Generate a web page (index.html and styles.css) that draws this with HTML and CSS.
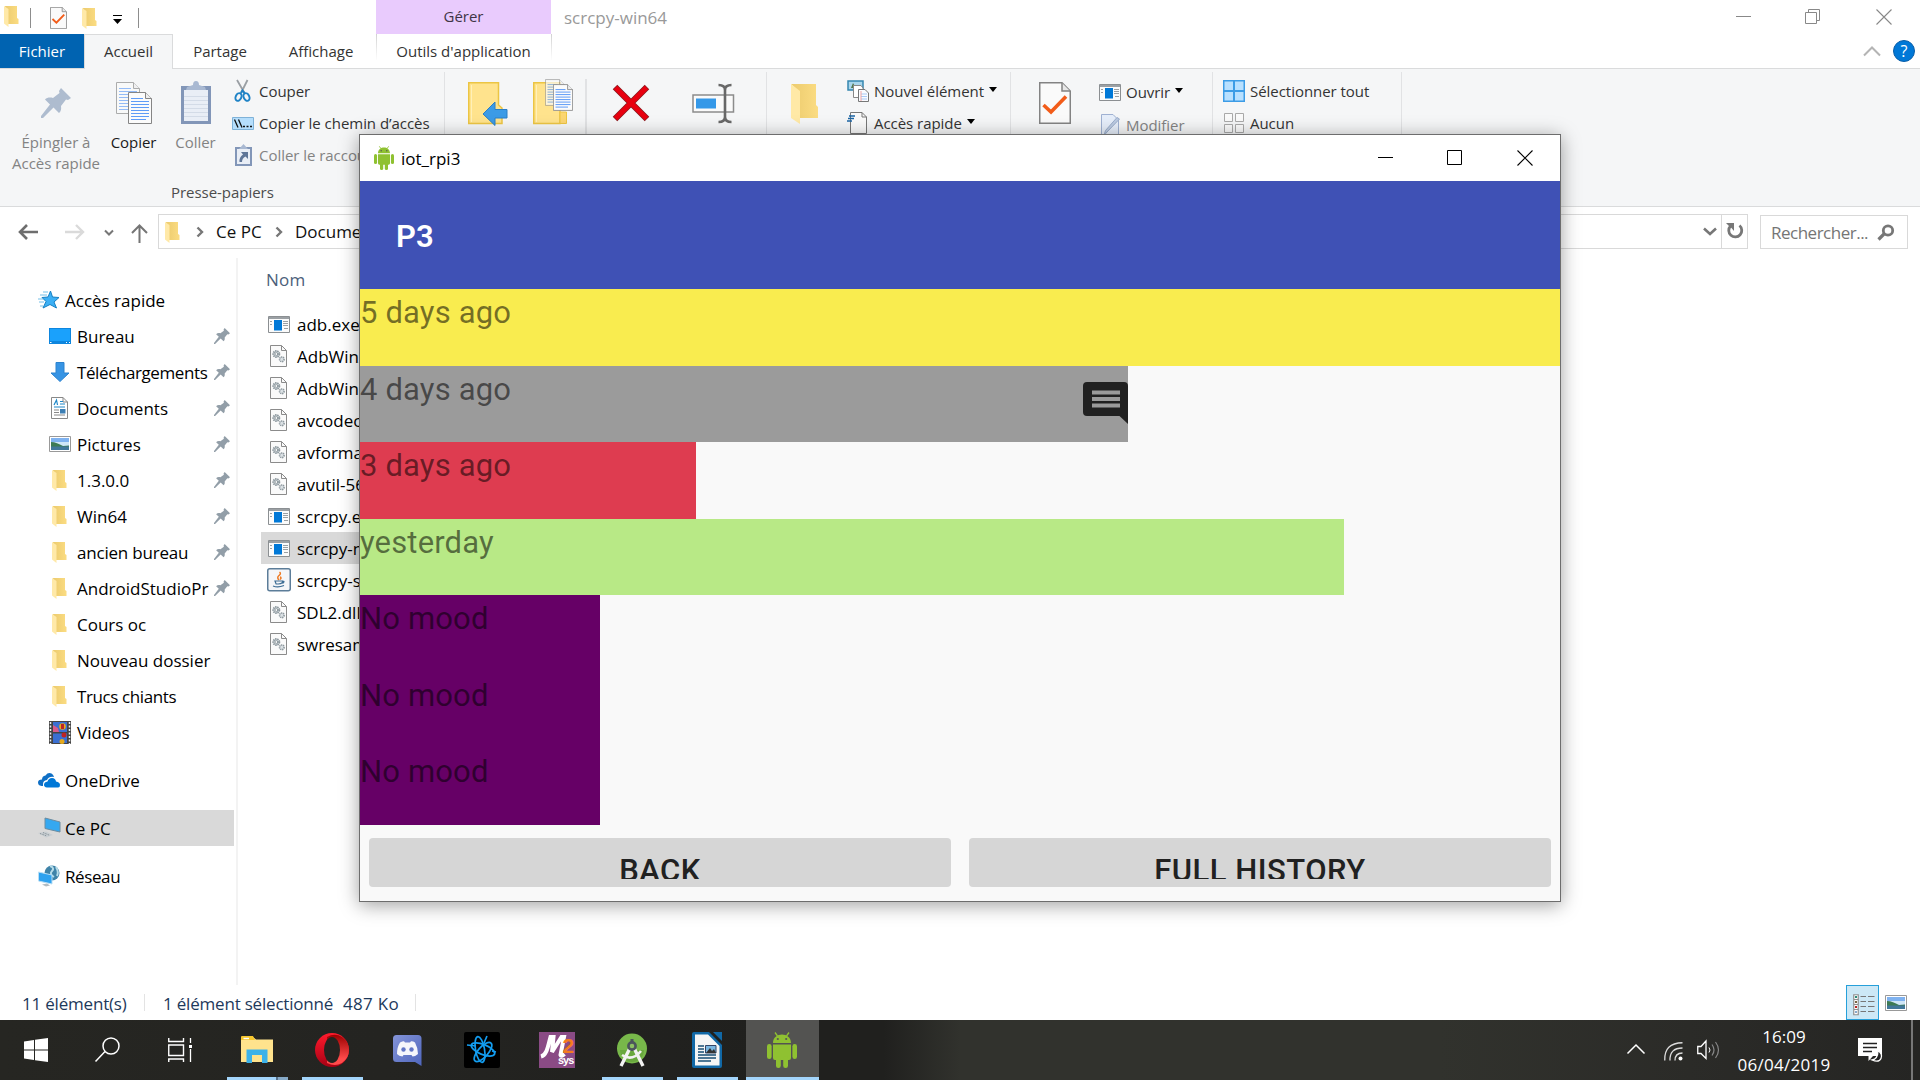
FILE: index.html
```html
<!DOCTYPE html>
<html lang="fr">
<head>
<meta charset="utf-8">
<title>scrcpy-win64</title>
<link rel="stylesheet" href="styles.css">
</head>
<body>
<svg class="defs" width="0" height="0">
  <defs>
    <linearGradient id="gold" x1="0" x2="1"><stop offset="0" stop-color="#eccb6e"/><stop offset="1" stop-color="#fbdc82"/></linearGradient>
    <linearGradient id="operaA" x1="0" y1="0" x2="0" y2="1"><stop offset="0" stop-color="#ff1b2d"/><stop offset="1" stop-color="#a70014"/></linearGradient>
    <linearGradient id="operaB" x1="0" y1="0" x2="0" y2="1"><stop offset="0" stop-color="#9c0000"/><stop offset=".8" stop-color="#ff4b4b"/></linearGradient>
    <linearGradient id="discordG" x1="0" y1="0" x2="1" y2="1"><stop offset="0" stop-color="#8494d8"/><stop offset="1" stop-color="#4f66bd"/></linearGradient>
    <symbol id="folder" viewBox="0 0 15 22"><path d="M1 1H13V13L14.500 14V19H4Z" fill="url(#gold)"/><path d="M0 1L4.500 4V22L0 18.500Z" fill="#ffe9a8"/></symbol>
    <symbol id="pin" viewBox="0 0 30 30"><path d="M20 0L30 10L27 12L25 11.500L20 18C20.500 21 20 23.500 18 25L12.500 19.500L2 30H0V28L9 16.500L4 11.500C6 9.500 9 9 12 10L18.500 5L18 3Z"/></symbol>
    <symbol id="page" viewBox="0 0 24 32"><path d="M.5.5H17.500L23.500 6.500V31.500H.5Z" fill="#fbfbfb" stroke="#858585"/><path d="M17.500.5V6.500H23.500" fill="#eee" stroke="#858585"/><path d="M3 6.500H15M3 9.500H21M3 12.500H21M3 15.500H21M3 18.500H21M3 21.500H21M3 24.500H21M3 27.500H18" stroke="#5f9cf7" stroke-width="1.200"/></symbol>
    <symbol id="check" viewBox="0 0 32 42"><path d="M.75.75H23L31.250 9V41.250H.75Z" fill="#fafafa" stroke="#838383" stroke-width="1.500"/><path d="M23 1V9H31" fill="#e7e7e7" stroke="#838383" stroke-width="1.500"/><path d="M4.500 23L12 30L27 14.500" fill="none" stroke="#f25c19" stroke-width="3.600"/></symbol>
    <symbol id="exe" viewBox="0 0 22 17"><path d="M.5.5H21.500V16.500H.5Z" fill="#fbfbfb" stroke="#8b8f92"/><path d="M1 1H21V3H1Z" fill="#9ba0a4"/><path d="M6 4H14V14.500H6Z" fill="#0078d7"/><path d="M2 5.500H4M2 8.500H4M15 5.500H20M15 7.500H20M15 9.500H20M16 12.500H20" stroke="#9aa0a4"/></symbol>
    <symbol id="dll" viewBox="0 0 17 22"><path d="M.5.5H11.500L16.500 5.500V21.500H.5Z" fill="#fafafa" stroke="#8b8b8b"/><path d="M11.500.5V5.500H16.500" fill="none" stroke="#8b8b8b"/><circle cx="6.300" cy="9" r="3" fill="#dce2e5" stroke="#8c979d" stroke-width="2" stroke-dasharray="1.400 .7"/><circle cx="6.300" cy="9" r="1.400" fill="#fff" stroke="#7c888e" stroke-width=".8"/><circle cx="11.800" cy="14.300" r="2.300" fill="#dce2e5" stroke="#8c979d" stroke-width="1.600" stroke-dasharray="1.200 .6"/></symbol>
    <symbol id="chev" viewBox="0 0 14 9"><path d="M1 1.500L7 7L13 1.500" fill="none" stroke="currentColor" stroke-width="2.600"/></symbol>
    <symbol id="photo" viewBox="0 0 22 16"><path d="M.5.5H21.500V15.500H.5Z" fill="#fff" stroke="#999"/><path d="M2 2H20V9H2Z" fill="#7fb2f0"/><path d="M2 6H20V10H2Z" fill="#cfe6f7"/><path d="M2 6C6 6 10 8 14 10L20 9.500V11H2Z" fill="#3d7a55"/><path d="M2 10.500H20V14H2Z" fill="#41779a"/></symbol>
    <symbol id="droid" viewBox="0 0 30 36"><g fill="#8fc131"><rect x="0" y="12" width="4.600" height="15" rx="2.300"/><rect x="25.400" y="12" width="4.600" height="15" rx="2.300"/><path d="M6 11C6 -.5 24 -.5 24 11ZM6 12.500H24V26Q24 28 22 28H8Q6 28 6 26Z"/><rect x="9" y="24" width="4.800" height="12" rx="2.300"/><rect x="16.200" y="24" width="4.800" height="12" rx="2.300"/><path d="M8 .5L10.500 4M22 .5L19.500 4" stroke="#8fc131" stroke-width="1.300"/></g><circle cx="10.800" cy="7" r="1.100" fill="#555"/><circle cx="19.200" cy="7" r="1.100" fill="#555"/></symbol>
    <symbol id="caret" viewBox="0 0 8 5"><path d="M0 0H8L4 5Z"/></symbol>
    <symbol id="close" viewBox="0 0 16 16"><path d="M.5.5L15.500 15.500M15.500.5L.5 15.500" fill="none" stroke="currentColor" stroke-width="1.100"/></symbol>
  </defs>
</svg>

<main class="explorer">
  <header class="titlebar">
    <div class="quick">
      <svg class="folder-sm" width="15" height="22"><use href="#folder"/></svg>
      <i class="qsep"></i>
      <svg class="q-check" width="17" height="22"><use href="#check"/></svg>
      <svg class="q-folder" width="15" height="22"><use href="#folder"/></svg>
      <svg class="q-more" width="9" height="9" viewBox="0 0 9 9"><path d="M0 .5H9" stroke="#000"/><path d="M0 4H9L4.500 9Z"/></svg>
      <i class="qsep q-last"></i>
    </div>
    <div class="manage">Gérer</div>
    <div class="title">scrcpy-win64</div>
    <div class="controls">
      <svg width="15" height="16"><path d="M0 7.500H15" stroke="#888"/></svg>
      <svg width="16" height="16"><path d="M.5 3.500H11.500V14.500H.5ZM3.500 3.500V.5H14.500V11.500H11.500" fill="none" stroke="#888"/></svg>
      <svg width="16" height="16" class="gray"><use href="#close"/></svg>
    </div>
  </header>

  <nav class="tabs">
    <div class="tab file">Fichier</div>
    <div class="tab active">Accueil</div>
    <div class="tab share">Partage</div>
    <div class="tab view">Affichage</div>
    <div class="tab tools">Outils d'application</div>
    <svg class="fold" width="18" height="11"><path d="M1 9.500L9 1.500L17 9.500" fill="none" stroke="#b4b4b4" stroke-width="2"/></svg>
    <div class="help">?</div>
  </nav>

  <section class="ribbon">
    <div class="group clip">
      <div class="group-row">
        <div class="big pinbig off"><svg width="30" height="30" fill="#aebccf"><use href="#pin"/></svg><span>Épingler à<br>Accès rapide</span></div>
        <div class="big copy"><svg width="38" height="46"><use href="#page" x="1" y="2" width="24" height="32" opacity=".65"/><use href="#page" x="13" y="12" width="24" height="32"/></svg><span>Copier</span></div>
        <div class="big paste off"><svg width="30" height="44"><path d="M0 5H30V43H0Z" fill="#8296b8"/><path d="M3 9H27V40H3Z" fill="#e9eef6"/><path d="M3 15.500H27M3 19.500H27M3 23.500H27M3 27.500H27M3 31.500H27M3 35.500H27" stroke="#d3dbe7"/><path d="M5 9L6 6L12 4Q12 0 15 0T18 4L24 6L25 9Z" fill="#a9b9d2"/></svg><span>Coller</span></div>
        <div class="smalls">
          <div class="small"><svg width="22" height="22" viewBox="0 0 22 22"><path d="M5 0L12.500 13M15.500 0L9 13" stroke="#9a9fa4" stroke-width="1.800"/><ellipse cx="6.500" cy="17" rx="2.800" ry="4" transform="rotate(25 6.500 17)" fill="none" stroke="#1f83c6" stroke-width="2"/><ellipse cx="14.500" cy="17" rx="2.800" ry="4" transform="rotate(-25 14.500 17)" fill="none" stroke="#1f83c6" stroke-width="2"/><path d="M9 13L10.500 10.500L12.500 13" stroke="#1f83c6" stroke-width="2" fill="none"/></svg>Couper</div>
          <div class="small"><svg width="22" height="13"><path d="M.5.5H21.500V12.500H.5Z" fill="#b5defc" stroke="#7fb2d8"/><path d="M2.500 2.500L6 10.500M6.500 2.500L10 10.500" stroke="#111" stroke-width="1.300"/><path d="M11 9.500H13M14.500 9.500H16.500M18 9.500H20" stroke="#111" stroke-width="1.500"/></svg>Copier le chemin d’accès</div>
          <div class="small off"><svg width="22" height="22"><path d="M4 4H19V21H4Z" fill="#e9eef6" stroke="#8296b8" stroke-width="2"/><path d="M7 5L11.500 0L16 5Z" fill="#a9b9d2"/><path d="M9 8H16V15L13.500 12.500Q10 14 10 18H7.500Q7 13 11 10.500Z" fill="#5f7698"/></svg>Coller le raccourci</div>
        </div>
      </div>
      <div class="group-name">Presse-papiers</div>
    </div>

    <div class="group organise">
      <svg class="ico-move" width="40" height="44"><path d="M.75.75H30.500V23L34 26V41.500H.75Z" fill="#ffe38d" stroke="#ecc544" stroke-width="1.500"/><path d="M3.500 3V40" stroke="#fff0b8"/><path d="M15 32L27 20V27.500H39V36H27V43.500Z" fill="#3c9be6" stroke="#2a7fc6"/></svg>
      <svg class="ico-copyto" width="41" height="46"><path d="M.75 3.750H27V44.500H.75Z" fill="#ffe38d" stroke="#ecc544" stroke-width="1.500"/><path d="M27 33H33.500V44.500H27Z" fill="#fcd671" stroke="#ecc544"/><path d="M3.500 6V43" stroke="#fff0b8"/><use href="#page" x="12" y="0" width="20" height="27" opacity=".7"/><use href="#page" x="20" y="5" width="20" height="27"/></svg>
      <i class="innersep"></i>
      <svg class="ico-del" width="38" height="38"><path d="M3 3L35 35M35 3L3 35" stroke="#8a1a1f" stroke-width="6.400"/><path d="M3.500 3.500L34.500 34.500M34.500 3.500L3.500 34.500" stroke="#e8000f" stroke-width="4.800"/></svg>
      <svg class="ico-ren" width="43" height="39"><path d="M1 11H41.500V28H1Z" fill="#fafafa" stroke="#8c8c8c" stroke-width="1.500"/><path d="M4 14.500H24V24.500H4Z" fill="#3498e8"/><path d="M26.500 1Q33 1 33 6V33Q33 38 26.500 38M39.500 1Q33 1 33 6M33 33Q33 38 39.500 38" fill="none" stroke="#686868" stroke-width="2.600"/></svg>
    </div>

    <div class="group create">
      <svg class="ico-new" width="29" height="42" viewBox="0 0 29 42"><path d="M0 1H25V22L27 24V35H8V9Z" fill="url(#gold)"/><path d="M0 1L9 8V41L0 35Z" fill="#ffe9a6"/></svg>
      <div class="smalls">
        <div class="small"><svg width="22" height="22"><path d="M1 1H16V10H1Z" fill="#a9d6ec" stroke="#3587b0" stroke-width="1.500"/><path d="M4 8L6 3L9 8Z" fill="#52764b"/><path d="M6.500 5.500H14L16 8V17.500H6.500Z" fill="#fff" stroke="#888"/><path d="M11.500 9.500H18L21.500 13V21.500H11.500Z" fill="#f9fbff" stroke="#777"/><path d="M14 14H20M14 16.500H20M14 19H20" stroke="#a9c9f5"/><path d="M14 11V21" stroke="#eda3a3"/></svg>Nouvel élément<svg class="caret" width="8" height="5"><use href="#caret"/></svg></div>
        <div class="small"><svg width="22" height="23"><path d="M3.500.5H15L19.500 5V21.500H3.500Z" fill="#fafafa" stroke="#777"/><path d="M15 .5V5H19.500" fill="none" stroke="#777"/><path d="M2 4H8M1 6.500H7M0 9H5" stroke="#1c66a5" stroke-width="1.300"/></svg>Accès rapide<svg class="caret" width="8" height="5"><use href="#caret"/></svg></div>
      </div>
    </div>

    <div class="group open">
      <svg class="ico-prop" width="32" height="42"><use href="#check"/></svg>
      <div class="smalls">
        <div class="small"><svg width="22" height="17"><use href="#exe"/></svg>Ouvrir<svg class="caret" width="8" height="5"><use href="#caret"/></svg></div>
        <div class="small off edit"><svg width="22" height="22"><path d="M2.500.5H14L19.500 6V21.500H2.500Z" fill="#e6eefa" stroke="#9fb1d2"/><path d="M20.500 5L8 18L5 21.500L6.500 16.500L18 3.500Z" fill="#bccbe2" stroke="#9aadcb"/></svg>Modifier</div>
      </div>
    </div>

    <div class="group select">
      <div class="smalls">
        <div class="small"><svg width="22" height="22"><path d="M0 0H22V22H0Z" fill="#3c9ce6"/><path d="M1.500 1.500H10V10H1.500ZM12 1.500H20.500V10H12ZM1.500 12H10V20.500H1.500ZM12 12H20.500V20.500H12Z" fill="#b8e0ff"/></svg>Sélectionner tout</div>
        <div class="small"><svg width="22" height="22"><path d="M1.500 1.500H9.500V9.500H1.500ZM12.500 1.500H20.500V9.500H12.500ZM1.500 12.500H9.500V20.500H1.500ZM12.500 12.500H20.500V20.500H12.500Z" fill="#fafafa" stroke="#a9a9a9"/></svg>Aucun</div>
      </div>
    </div>
  </section>

  <div class="addressrow">
    <svg class="a-back" width="20" height="16"><path d="M20 8H2M9 1L2 8L9 15" fill="none" stroke="#6e6e6e" stroke-width="2.600"/></svg>
    <svg class="a-fwd" width="20" height="16"><path d="M0 8H18M11 1L18 8L11 15" fill="none" stroke="#dadada" stroke-width="2.400"/></svg>
    <svg class="a-hist" width="10" height="7"><path d="M1 1.500L5 5.500L9 1.500" fill="none" stroke="#777" stroke-width="2"/></svg>
    <svg class="a-up" width="17" height="19"><path d="M8.500 19V2M1 9L8.500 1.500L16 9" fill="none" stroke="#757575" stroke-width="2"/></svg>
    <div class="address">
      <svg class="ad-folder" width="15" height="22"><use href="#folder"/></svg>
      <svg class="crumb" width="8" height="12"><path d="M1.500 1.500L6 6L1.500 10.500" fill="none" stroke="#777" stroke-width="2.400"/></svg>
      <span class="pc">Ce PC</span>
      <svg class="crumb" width="8" height="12"><path d="M1.500 1.500L6 6L1.500 10.500" fill="none" stroke="#777" stroke-width="2.400"/></svg>
      <span class="docs">Documents</span>
      <svg class="drop" width="14" height="9"><use href="#chev"/></svg>
      <div class="refresh"><svg width="17" height="17"><path d="M13.500 2.500A6.500 6.500 0 1 1 4.500 3" fill="none" stroke="#777" stroke-width="2.800"/><path d="M0 0H8V8L5.500 5L3 3Z" fill="#777"/></svg></div>
    </div>
    <div class="search"><span>Rechercher...</span><svg width="18" height="17"><circle cx="11" cy="6.500" r="4.700" fill="none" stroke="#777" stroke-width="2.800"/><path d="M7.500 9.500L1.500 15.500" stroke="#777" stroke-width="3.200"/></svg></div>
  </div>

  <section class="body">
    <aside class="tree">
      <div class="node root"><svg width="22" height="20"><path d="M12.500 1L14.500 7L21 7.500L16 12L18.500 18L12 14.500L5 18L8 11.500L4 7.500L10 7Z" fill="#3cb0f5" stroke="#1580c4"/><path d="M5 2H10M2 5H9M0 9H5M1 12H6M2 16H5" stroke="#72bfe8"/></svg>Accès rapide</div>
      <div class="node"><svg width="22" height="16"><path d="M0 0H22V16H0Z" fill="#0e86de"/><path d="M1 1H21V13H1Z" fill="#1aa1fc"/><path d="M1 14.500H2.500M17 14.500H18M20 14.500H21" stroke="#fff"/></svg>Bureau<svg class="tpin" width="16" height="16"><use href="#pin"/></svg></div>
      <div class="node tight"><svg width="22" height="20"><path d="M7 .5H15V11H20L11 19.500L2 11H7Z" fill="#3794e4" stroke="#2c83cf"/></svg>Téléchargements<svg class="tpin" width="16" height="16"><use href="#pin"/></svg></div>
      <div class="node"><svg width="22" height="22"><path d="M2.500.5H14L18.500 5V21.500H2.500Z" fill="#fff" stroke="#888"/><path d="M14 .5V5H18.500" fill="none" stroke="#888"/><path d="M5 8L7.500 3L8.500 8M11 4.500H14M11 7H16M5 10H16" stroke="#2088c8" fill="none" stroke-width="1.200"/><path d="M5 13H10M5 15.500H10M5 18H16" stroke="#888"/><path d="M11 12H16.500V16.500H11Z" fill="#3d7fb4"/></svg>Documents<svg class="tpin" width="16" height="16"><use href="#pin"/></svg></div>
      <div class="node"><svg width="22" height="16"><use href="#photo"/></svg>Pictures<svg class="tpin" width="16" height="16"><use href="#pin"/></svg></div>
      <div class="node"><svg width="22" height="22"><use href="#folder" x="3" width="15" height="22"/></svg>1.3.0.0<svg class="tpin" width="16" height="16"><use href="#pin"/></svg></div>
      <div class="node"><svg width="22" height="22"><use href="#folder" x="3" width="15" height="22"/></svg>Win64<svg class="tpin" width="16" height="16"><use href="#pin"/></svg></div>
      <div class="node snug"><svg width="22" height="22"><use href="#folder" x="3" width="15" height="22"/></svg>ancien bureau<svg class="tpin" width="16" height="16"><use href="#pin"/></svg></div>
      <div class="node"><svg width="22" height="22"><use href="#folder" x="3" width="15" height="22"/></svg>AndroidStudioPr<svg class="tpin" width="16" height="16"><use href="#pin"/></svg></div>
      <div class="node"><svg width="22" height="22"><use href="#folder" x="3" width="15" height="22"/></svg>Cours oc</div>
      <div class="node"><svg width="22" height="22"><use href="#folder" x="3" width="15" height="22"/></svg>Nouveau dossier</div>
      <div class="node tight"><svg width="22" height="22"><use href="#folder" x="3" width="15" height="22"/></svg>Trucs chiants</div>
      <div class="node"><svg width="22" height="23"><path d="M0 0H22V23H0Z" fill="#444"/><path d="M1.500 1V23M20.500 1V23" stroke="#eee" stroke-width="1.500" stroke-dasharray="2 1.500"/><path d="M4 1H18V11H4ZM4 12.500H18V22H4Z" fill="#3a6fd2"/><path d="M4 4L9 7L10 11H4Z" fill="#d95a8a"/><circle cx="13.500" cy="5.500" r="3.300" fill="#e5a91c"/><path d="M12 3H15V8H12Z" fill="#bd2424"/><circle cx="15" cy="14" r="2.500" fill="#bd2424"/><circle cx="13" cy="20.500" r="2.500" fill="#e5a91c"/></svg>Videos</div>
      <div class="node root spaced"><svg width="22" height="15"><path d="M5 13H3.500Q0 12.500 0 9.500T4 6.500Q4 3 7.500 2.500Q10-1 13.500.5Q15.500 1.500 16 4Q11 3 9 7Q5 7.500 5 11Z" fill="#0f6fc5"/><path d="M9 14.500Q5.800 14 6 11.500T9.500 8.500Q10.500 5 14 5T18 8.500Q22 9 22 12T19.500 14.500Z" fill="#0078d7"/></svg>OneDrive</div>
      <div class="node root spaced current"><svg width="22" height="22"><path d="M7 1L22 5V15L7 11.500Z" fill="#35a8f0" stroke="#6c8ca0"/><path d="M0 16L8 14.500L15 18L8 20.500Z" fill="#c8ced2"/><path d="M2 16.500L9 19M5 15.500L12 18.500" stroke="#89949a" stroke-dasharray="1.500 1"/></svg>Ce PC</div>
      <div class="node root spaced tight"><svg width="22" height="22"><circle cx="14" cy="8" r="7.500" fill="#3f83a8"/><path d="M12 1Q17 3 14 6T16 12M18 2Q21 7 19 11" stroke="#b5dbe8" stroke-width="2" fill="none"/><path d="M.5 7L14 10V19L.5 16Z" fill="#2fa2ef" stroke="#b9dff5"/><path d="M4 19.500L9 18.500L12 20.500L8 21.500Z" fill="#b3bcc2"/></svg>Réseau</div>
    </aside>
    <div class="files">
      <div class="colhead">Nom</div>
      <div class="row"><svg width="22" height="17"><use href="#exe"/></svg><span>adb.exe</span></div>
      <div class="row"><svg width="22" height="22"><use href="#dll" x="2" width="17" height="22"/></svg><span>AdbWinApi.dll</span></div>
      <div class="row"><svg width="22" height="22"><use href="#dll" x="2" width="17" height="22"/></svg><span>AdbWinUsb</span></div>
      <div class="row"><svg width="22" height="22"><use href="#dll" x="2" width="17" height="22"/></svg><span>avcodec-58</span></div>
      <div class="row"><svg width="22" height="22"><use href="#dll" x="2" width="17" height="22"/></svg><span>avformat-58</span></div>
      <div class="row"><svg width="22" height="22"><use href="#dll" x="2" width="17" height="22"/></svg><span>avutil-56.dll</span></div>
      <div class="row"><svg width="22" height="17"><use href="#exe"/></svg><span>scrcpy.exe</span></div>
      <div class="row picked"><svg width="22" height="17"><use href="#exe"/></svg><span>scrcpy-noconsole</span></div>
      <div class="row"><svg class="jar" width="24" height="24"><rect x=".75" y=".75" width="22.500" height="22" rx="2" fill="#f4f6f8" stroke="#5c7d99" stroke-width="1.500"/><path d="M12 12Q9.500 9.500 12 7.500T12.500 4M13 11.500Q15 9.500 13 9" stroke="#ee7a22" stroke-width="1.500" fill="none"/><path d="M8 13H15.500V14.500Q13.500 16.500 9 15.800ZM15.500 13.500Q18.500 13 15.500 15.500M6 18Q11 20 17 17.500" stroke="#3c6d94" stroke-width="1.200" fill="none"/></svg><span>scrcpy-server.jar</span></div>
      <div class="row"><svg width="22" height="22"><use href="#dll" x="2" width="17" height="22"/></svg><span>SDL2.dll</span></div>
      <div class="row"><svg width="22" height="22"><use href="#dll" x="2" width="17" height="22"/></svg><span>swresample-3</span></div>
    </div>
  </section>

  <footer class="status">
    <span class="count">11 élément(s)</span><i></i>
    <span class="sel">1 élément sélectionné</span><span class="size">487 Ko</span><i></i>
    <div class="details"><svg width="22" height="22"><path d="M.75.75H5.250V20.750H.75ZM1 5.500H5M1 10.500H5M1 15.500H5" fill="#fff" stroke="#909090" stroke-width="1.200"/><path d="M2 3H4" stroke="#2a8a78" stroke-width="2"/><path d="M2 8H4" stroke="#764" stroke-width="2"/><path d="M2 13H4" stroke="#b22" stroke-width="2"/><path d="M2 18H4" stroke="#8ac" stroke-width="2"/><path d="M7.500 2.500H13M15 2.500H21.500M7.500 7.500H13M15 7.500H21.500M7.500 12.500H13M15 12.500H21.500M7.500 17.500H13M15 17.500H21.500" stroke="#777"/></svg></div>
    <svg class="thumbs" width="22" height="16"><use href="#photo"/></svg>
  </footer>
</main>

<div class="window">
  <div class="wtitle">
    <svg class="wicon" width="20" height="24"><use href="#droid"/></svg>
    <span>iot_rpi3</span>
    <div class="wcontrols">
      <svg width="15" height="16"><path d="M0 7.500H15" stroke="#000"/></svg>
      <svg width="15" height="16"><path d="M.5.5H14.500V14.500H.5Z" fill="none" stroke="#000"/></svg>
      <svg width="16" height="16"><use href="#close"/></svg>
    </div>
  </div>
  <div class="app">
    <div class="appbar">P3</div>
    <div class="moods">
      <div class="mood happy">5 days ago</div>
      <div class="mood normal">4 days ago<svg class="note" width="45" height="42"><path d="M4 0H41Q45 0 45 4V42L36.500 34H4Q0 34 0 30V4Q0 0 4 0Z" fill="#212121"/><path d="M9 10.500H37M9 17H37M9 23.500H37" stroke="#9b9b9b" stroke-width="4"/></svg></div>
      <div class="mood sad">3 days ago</div>
      <div class="mood good">yesterday</div>
      <div class="mood none">No mood</div>
      <div class="mood none">No mood</div>
      <div class="mood none">No mood</div>
    </div>
    <div class="actions">
      <div class="btn"><span>BACK</span></div>
      <div class="btn"><span>FULL HISTORY</span></div>
    </div>
  </div>
</div>

<footer class="taskbar">
  <div class="task start"><svg width="24" height="24"><path d="M0 3.400L10 2V11.400H0ZM11 1.800L24 0V11.400H11ZM0 12.500H10V22L0 20.600ZM11 12.500H24V24L11 22.200Z" fill="#fff"/></svg></div>
  <div class="task find"><svg width="26" height="26"><circle cx="16" cy="9" r="8" fill="none" stroke="#fff" stroke-width="1.500"/><path d="M10 14.500L.5 24.500" stroke="#fff" stroke-width="1.500"/></svg></div>
  <div class="task views"><svg width="25" height="24"><path d="M.75 0V3.500H15.500V0M.75 7H15.500V17.500H.75ZM.75 24V21H15.500V24" fill="none" stroke="#fff" stroke-width="1.400"/><path d="M22.500 0V5M22.500 11V24" stroke="#fff" stroke-width="1.300"/><path d="M21 7H24V10H21Z" fill="#fff"/></svg></div>
  <div class="task multi"><svg width="32" height="28"><path d="M0 1H12L15 3.500H32V26H0Z" fill="#ffe38d"/><path d="M0 1Q0 0 1 0H12L14 4H0Z" fill="#f7c72f"/><path d="M2.500 2.500H8" stroke="#fff" stroke-width="1.400"/><path d="M5.500 13.500H26.500V27H21V19H11V27H5.500Z" fill="#3cb2e9"/></svg></div>
  <div class="task run"><svg width="34" height="34"><ellipse cx="17" cy="17" rx="17" ry="17" fill="url(#operaA)"/><path d="M12 4Q20-.5 27 4Q34 9 34 17T27 30Q20 34 12 30Z" fill="url(#operaB)"/><ellipse cx="17" cy="17" rx="8" ry="13" fill="#242421"/></svg></div>
  <div class="task"><svg width="29" height="31"><path d="M3.500 0H25Q28.500 0 28.500 3.500V31L22 27H3.500Q0 27 0 23.500V3.500Q0 0 3.500 0Z" fill="url(#discordG)"/><path d="M7 7.500Q10 6 11 6.200L12 7.500H17L18 6.200Q20 6 22 7.500Q25 13 25 19Q22 21.500 19.500 21.500L18.500 20H10.500L9.500 21.500Q6 21 4 19Q4 12 7 7.500Z" fill="#f5f6fb"/><circle cx="10.500" cy="14.500" r="2.200" fill="#6276c6"/><circle cx="18.500" cy="14.500" r="2.200" fill="#6276c6"/></svg></div>
  <div class="task"><svg width="36" height="36"><rect width="36" height="36" rx="2" fill="#000"/><g fill="none" stroke="#139df0" stroke-width="1.700"><ellipse cx="16" cy="17.500" rx="4.500" ry="13" transform="rotate(-10 16 17.500)"/><ellipse cx="19" cy="20" rx="5" ry="12" transform="rotate(42 19 20)"/><ellipse cx="19" cy="17.500" rx="5" ry="12.500" transform="rotate(112 19 17.500)"/><path d="M3 13L12 14M23 4L20 11M28 19L32 20"/></g></svg></div>
  <div class="task"><svg width="36" height="36"><path d="M0 0H36V36H0Z" fill="#8a4b85"/><path d="M2 24.500C8 23 9 14 11.500 5H14.500L13 20L22.500 5H25L21.500 23Q22 25 25.500 22" stroke="#fff" stroke-width="4" fill="none"/><text class="m2-two" x="23.500" y="21">2</text><text class="m2-sys" x="19" y="32">sys</text></svg></div>
  <div class="task run"><svg width="30" height="34"><circle cx="15" cy="15.500" r="15" fill="#78b84a"/><path d="M3 17A12 12 0 0 0 27 17" fill="#69a83e"/><path d="M13 15L4 33M17 15L26 33" stroke="#f2f2f2" stroke-width="3.400"/><path d="M5 22Q15 29 24 18" fill="none" stroke="#f2f2f2" stroke-width="2.600"/><path d="M13.500 6H16.500V10H13.500Z" fill="#4b565b"/><circle cx="15" cy="13" r="3.600" fill="#8cc063" stroke="#4b565b" stroke-width="2.600"/></svg></div>
  <div class="task run"><svg width="30" height="36"><path d="M2 0H17L30 13V34Q30 36 28 36H2Q0 36 0 34V2Q0 0 2 0Z" fill="#1168a6"/><path d="M21 0H30V9Z" fill="#1168a6"/><path d="M3 2.500H16L27.500 14V33.500H3Z" fill="#f5f5f5"/><path d="M6 14H12M6 17H12M6 20H12M6 23H24M6 26H24M6 29H19" stroke="#174e74" stroke-width="1.400"/><path d="M13.500 13.500H24V21H13.500Z" fill="#79b5df" stroke="#346"/><path d="M14 21L18 16L20 19L22 17L24 21Z" fill="#333"/></svg></div>
  <div class="task on"><svg width="30" height="36"><use href="#droid"/></svg></div>
  <div class="tray">
    <svg class="t-up" width="18" height="10"><path d="M.5 9.500L9 1L17.500 9.500" fill="none" stroke="#fff" stroke-width="1.500"/></svg>
    <svg class="t-wifi" width="19" height="19"><g fill="none" stroke="#ddd" stroke-width="1.300"><path d="M.75 18.500Q0 1 18.500.75M6 18.500Q5.500 6 18.500 6M11 18.500Q11 11 18.500 11"/></g><circle cx="16.500" cy="16.500" r="2" fill="#fff"/></svg>
    <svg class="t-vol" width="23" height="20"><path d="M.75 6.500H4L9 1V18.500L4 13.500H.75Z" fill="none" stroke="#fff" stroke-width="1.300"/><path d="M12 7.500Q14 10 12 12.500" stroke="#fff" fill="none"/><path d="M15 4.500Q19 10 15 15.500M18.500 2Q24.500 10 18.500 18" stroke="#888" fill="none" stroke-width="1.200"/></svg>
    <div class="clock"><span class="hour">16:09</span><span class="date">06/04/2019</span></div>
    <svg class="t-note" width="26" height="25"><path d="M0 0H24V18H15L10.500 23V18H0Z" fill="#fff"/><path d="M5 5.500H19M5 9.500H19M5 13.500H14" stroke="#222" stroke-width="1.300"/><path d="M20 12.500Q25 16 23 20.500T14 22Q20 21 20 12.500Z" fill="#222" stroke="#fff" stroke-width="1.300"/></svg>
    <i class="peek"></i>
  </div>
</footer>
</body>
</html>
```
FILE: styles.css
```css
* { box-sizing: border-box; }
body {
  margin: 0;
  width: 1920px;
  height: 1080px;
  overflow: hidden;
  position: relative;
  display: flex;
  flex-direction: column;
  background: #fff;
  color: #000;
  font-family: "Open Sans", "Noto Sans", sans-serif;
  font-size: 17px;
  white-space: nowrap;
}
svg { display: block; flex: none; overflow: visible; }
.defs { position: absolute; }
.explorer { height: 1020px; display: flex; flex-direction: column; }

/* Title bar */
.titlebar { height: 34px; display: flex; align-items: flex-start; }
.quick { width: 376px; height: 34px; display: flex; padding-left: 4px; }
.folder-sm { margin-top: 5px; }
.qsep { width: 1px; height: 20px; margin: 8px 0 0 11px; background: #8d8d8d; }
.q-check { margin: 7px 0 0 19px; }
.q-folder { margin: 7px 0 0 15px; }
.q-more { margin: 15px 0 0 16px; }
.q-last { margin-left: 16px; }
.manage {
  width: 175px; height: 34px;
  background: #e9cbfd; color: #3f3546;
  font-size: 15px; line-height: 33px; text-align: center;
}
.title { margin-left: 13px; line-height: 35px; color: #999; }
.controls { margin-left: auto; margin-right: 28px; padding-top: 9px; display: flex; gap: 54px; }
.controls svg:nth-child(-n+2) { margin-left: -1px; margin-right: 1px; }
.gray { color: #888; }

/* Tabs */
.tabs { height: 34px; display: flex; font-size: 15px; line-height: 34px; color: #333; }
.tab { text-align: center; height: 34px; }
.file { width: 84px; background: #0063b1; color: #fff; }
.active { width: 89px; height: 35px; background: #f5f6f7; border: 1px solid #dadbdc; border-bottom: 0; line-height: 32px; position: relative; z-index: 1; }
.share { width: 94px; }
.view { width: 109px; padding-right: 1px; }
.tools {
  width: 176px; height: 26px; padding-right: 1px;
  border: 1px solid; border-width: 0 1px;
  border-image: linear-gradient(#d0d0d0, #fff) 1;
}
.fold { margin: 12px 0 0 auto; }
.help {
  width: 22px; height: 22px; margin: 6px 5px 0 12px;
  border-radius: 50%; border: 1px solid #0a5ea8; background: #0078d7; color: #fff;
  text-align: center; line-height: 20px; font-size: 16px;
}

/* Ribbon */
.ribbon {
  height: 139px; display: flex;
  background: #f5f6f7; border: 1px solid #dadbdc; border-width: 1px 0;
  font-size: 15px; color: #333; letter-spacing: -.04px;
}
.group { display: flex; margin-top: 3px; height: 128px; border-right: 1px solid #e1e2e4; }
.clip { width: 445px; flex-direction: column; }
.group-row { display: flex; height: 108px; }
.group-name { margin-left: 171px; line-height: 26px; padding-top: 8px; color: #4c4c4c; }
.big { display: flex; flex-direction: column; align-items: center; text-align: center; line-height: 21px; padding-top: 8px; color: #1a1a1a; }
.big span { margin-top: auto; height: 39px; }
.pinbig { width: 100px; margin-left: 6px; }
.pinbig svg { margin-top: 8px; }
.copy { width: 55px; }
.paste { width: 69px; }
.paste svg { margin-top: 1px; }
.off, .big.off { color: #838383; }
.smalls { display: flex; flex-direction: column; }
.small { display: flex; align-items: center; height: 32px; }
.small svg:first-child { margin-right: 5px; }
.clip .smalls { padding-top: 3px; margin-left: 2px; }
.small .caret { margin: -3px 0 0 5px; }
.edit { padding-top: 2px; }

.organise { width: 322px; }
.ico-move { margin: 10px 0 0 23px; }
.ico-copyto { margin: 7px 0 0 25px; }
.innersep { width: 2px; height: 116px; margin: 7px 0 0 11px; background: #e1e2e4; }
.ico-del { margin: 12px 0 0 25px; }
.ico-ren { margin: 12px 0 0 42px; }
.create { width: 244px; }
.ico-new { margin: 11px 0 0 24px; }
.create .smalls { margin: 3px 0 0 27px; }
.open { width: 202px; }
.ico-prop { margin: 10px 0 0 28px; }
.open .smalls { margin: 4px 0 0 28px; }
.select { width: 189px; }
.select .smalls { margin: 3px 0 0 10px; }

/* Address bar */
.addressrow { height: 43px; display: flex; padding-top: 7px; color: #777; }
.a-back { margin: 10px 0 0 18px; }
.a-fwd { margin: 10px 0 0 27px; }
.a-hist { margin: 15px 0 0 19px; }
.a-up { margin: 10px 0 0 17px; }
.address { width: 1590px; height: 35px; margin-left: 10px; display: flex; align-items: center; border: 1px solid #d9d9d9; color: #777; }
.address span { color: #111; }
.ad-folder { margin-left: 6px; }
.crumb { margin-left: 16px; }
.pc { margin-left: 12px; width: 46px; }
.pc + .crumb { margin-left: 13px; }
.docs { margin-left: 12px; }
.drop { margin-left: auto; margin-right: 4px; }
.refresh { width: 26px; height: 33px; border-left: 1px solid #d9d9d9; display: flex; align-items: center; justify-content: center; }
.search { width: 148px; height: 34px; margin: 1px 0 0 12px; padding: 0 12px 0 10px; display: flex; align-items: center; justify-content: space-between; border: 1px solid #d9d9d9; color: #757575; letter-spacing: -.5px; }

/* Folder tree and files */
.body { height: 735px; display: flex; }
.tree { width: 238px; margin-top: 8px; padding: 24px 2px 0 0; border-right: 2px solid #f3f3f3; }
.node { height: 36px; display: flex; align-items: center; gap: 6px; padding-left: 49px; }
.root { padding-left: 38px; gap: 5px; }
.spaced { margin-top: 12px; }
.tight { letter-spacing: -.4px; }
.snug { letter-spacing: -.2px; }
.current { background: #d9d9d9; }
.tpin { margin-left: auto; margin-right: 4px; fill: #929ea8; }
.files { width: 700px; padding: 14px 0 0 23px; }
.colhead { padding-left: 5px; height: 44px; line-height: 32px; color: #4c607a; letter-spacing: .2px; }
.row { height: 32px; padding-left: 7px; display: flex; align-items: center; gap: 7px; }
.row span { padding-top: 1px; }
.jar { margin: 0 -1px; }
.picked { background: #d9d9d9; }

/* Status bar */
.status { height: 35px; display: flex; align-items: center; color: #1e395b; letter-spacing: -.2px; }
.status i { width: 1px; height: 17px; background: #e3e3e3; }
.status span { padding-top: 2px; }
.count { margin-left: 22px; width: 122px; }
.sel { margin-left: 18px; width: 180px; }
.size { width: 72px; letter-spacing: .3px; }
.details { margin-left: auto; width: 33px; height: 35px; padding: 8px 0 0 6px; background: #cce8f6; border: 1px solid #26a0da; }
.thumbs { margin: 0 13px 0 6px; }

/* scrcpy window, floating over the explorer */
.window {
  position: absolute; left: 359px; top: 134px; width: 1202px; height: 768px;
  border: 1px solid #6d6d6d; background: #fff;
  box-shadow: 0 3px 18px rgba(0,0,0,.38);
}
.wtitle { height: 46px; display: flex; align-items: center; padding-left: 14px; }
.wtitle span { margin-left: 7px; }
.wcontrols { display: flex; margin-left: auto; margin-right: 27px; gap: 54px; }
.wcontrols svg:last-child { margin-left: 1px; }
.app { height: 720px; background: #f9f9f9; font-family: Roboto, sans-serif; font-size: 31px; display: flex; flex-direction: column; }
.appbar { height: 108px; padding-left: 36px; line-height: 111px; background: #3f51b5; color: #fff; font-weight: 600; font-size: 31px; }
.moods { height: 536px; display: flex; flex-direction: column; }
.mood { flex: 1; line-height: 48px; color: rgba(0,0,0,.54); letter-spacing: .15px; }
.happy { background: #f9ec4f; }
.normal { width: 64%; background: #9b9b9b; display: flex; justify-content: space-between; }
.note { margin-top: 16px; }
.sad { width: 28%; background: #de3c50; }
.good { width: 82%; background: #b8e986; }
.none { width: 20%; background: #660066; }
.actions { display: flex; gap: 18px; padding: 13px 9px 0; }
.btn { flex: 1; height: 49px; border-radius: 4px; background: #d6d6d6; color: #212121; font-weight: 500; text-align: center; padding-top: 15px; }
.btn span { display: block; height: 26px; line-height: 35px; overflow: hidden; font-size: 31px; letter-spacing: .5px; }

/* Taskbar */
.taskbar { height: 60px; display: flex; background: linear-gradient(90deg, #262622 0, #242421 20%, #20201e 40%, #20201e 46%, #31322d 50%, #31322d 75%, #2b2b28 88%, #252523); padding-right: 7px; }
.task { width: 61px; margin-right: 14px; display: flex; align-items: center; justify-content: center; border-bottom: 3px solid transparent; padding: 3px 1px 0 0; }
.start { width: 72px; margin: 0; padding-right: 0; }
.find { width: 72px; margin: 0; padding-left: 1px; }
.views { width: 72px; margin-right: 11px; padding-left: 1px; padding-right: 0; }
.multi { border-image: linear-gradient(90deg, #a3d5fb 47px, #55708a 47px, #55708a 49px, #86a9c7 49px) 3; border-style: solid; border-width: 0 0 3px; }
.run { border-bottom-color: #a3d5fb; }
.on { width: 73px; margin-left: -6px; background-color: #535351; border-bottom-color: #a3d5fb; }
.m2-two { font: bold 21px "Liberation Sans", sans-serif; fill: #f47b20; }
.m2-sys { font: bold 11px "Liberation Sans Narrow", "Liberation Sans", sans-serif; letter-spacing: -1px; fill: #fff; }
.tray { margin-left: auto; display: flex; color: #fff; align-items: flex-start; }
.t-up { margin-top: 24px; }
.t-wifi { margin: 22px 0 0 19px; }
.t-vol { margin: 20px 0 0 14px; }
.clock { margin-left: 11px; width: 104px; height: 60px; display: flex; flex-direction: column; align-items: center; line-height: 28px; padding-top: 3px; }
.clock .hour { padding-left: 2px; }
.date { letter-spacing: .3px; padding-left: 2px; }
.t-note { margin: 18px 0 0 23px; }
.peek { width: 2px; height: 60px; margin-left: 27px; background: #777; }
```
